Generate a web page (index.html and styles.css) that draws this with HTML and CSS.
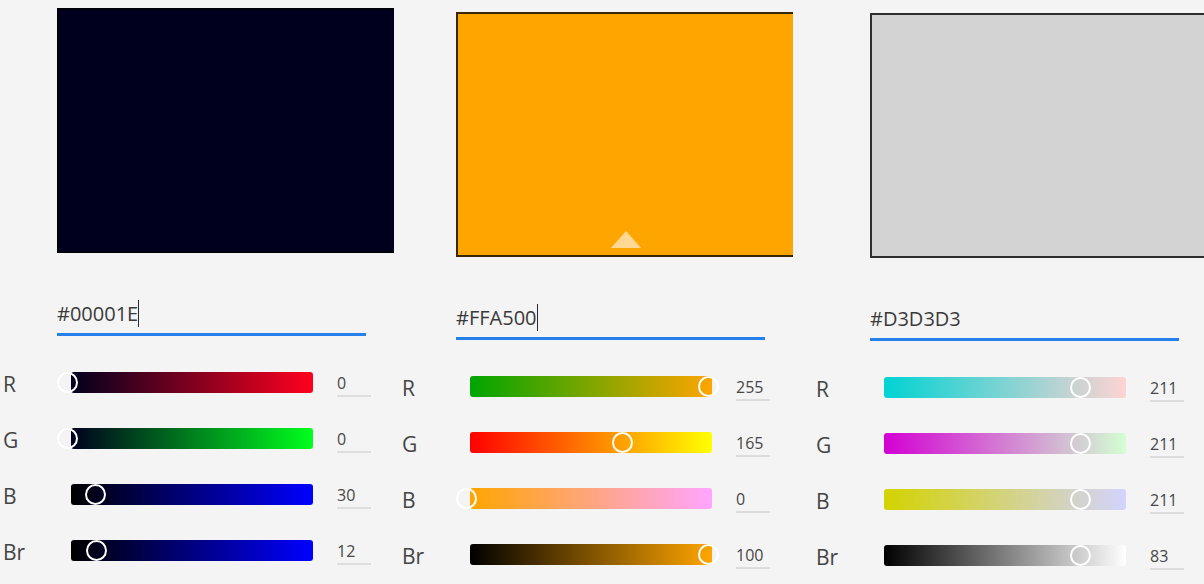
FILE: index.html
```html
<!DOCTYPE html>
<html lang="en">
<head>
<meta charset="utf-8">
<title>Colour pickers</title>
<link rel="stylesheet" href="styles.css">
</head>
<body>
<main class="pickers">
  <section class="picker picker--navy">
    <div class="swatch swatch--navy"></div>
    <div class="hex"><span class="hex-text hex-text--focus">#00001E</span></div>
    <div class="channels">
      <div class="channel">
        <span class="channel-label">R</span>
        <div class="track navy-r"><span class="thumb" style="--p:0"></span></div>
        <span class="channel-value">0</span>
      </div>
      <div class="channel">
        <span class="channel-label">G</span>
        <div class="track navy-g"><span class="thumb" style="--p:0"></span></div>
        <span class="channel-value">0</span>
      </div>
      <div class="channel">
        <span class="channel-label">B</span>
        <div class="track navy-b"><span class="thumb" style="--p:0.1176"></span></div>
        <span class="channel-value">30</span>
      </div>
      <div class="channel">
        <span class="channel-label">Br</span>
        <div class="track navy-br"><span class="thumb" style="--p:0.12"></span></div>
        <span class="channel-value">12</span>
      </div>
    </div>
  </section>

  <section class="picker picker--orange">
    <div class="swatch swatch--orange"><span class="swatch-marker"></span></div>
    <div class="hex"><span class="hex-text hex-text--focus">#FFA500</span></div>
    <div class="channels">
      <div class="channel">
        <span class="channel-label">R</span>
        <div class="track orange-r"><span class="thumb" style="--p:1"></span></div>
        <span class="channel-value">255</span>
      </div>
      <div class="channel">
        <span class="channel-label">G</span>
        <div class="track orange-g"><span class="thumb" style="--p:0.647"></span></div>
        <span class="channel-value">165</span>
      </div>
      <div class="channel">
        <span class="channel-label">B</span>
        <div class="track orange-b"><span class="thumb" style="--p:0"></span></div>
        <span class="channel-value">0</span>
      </div>
      <div class="channel">
        <span class="channel-label">Br</span>
        <div class="track orange-br"><span class="thumb" style="--p:1"></span></div>
        <span class="channel-value">100</span>
      </div>
    </div>
  </section>

  <section class="picker picker--grey">
    <div class="swatch swatch--grey"></div>
    <div class="hex"><span class="hex-text">#D3D3D3</span></div>
    <div class="channels">
      <div class="channel">
        <span class="channel-label">R</span>
        <div class="track grey-r"><span class="thumb" style="--p:0.8275"></span></div>
        <span class="channel-value">211</span>
      </div>
      <div class="channel">
        <span class="channel-label">G</span>
        <div class="track grey-g"><span class="thumb" style="--p:0.8275"></span></div>
        <span class="channel-value">211</span>
      </div>
      <div class="channel">
        <span class="channel-label">B</span>
        <div class="track grey-b"><span class="thumb" style="--p:0.8275"></span></div>
        <span class="channel-value">211</span>
      </div>
      <div class="channel">
        <span class="channel-label">Br</span>
        <div class="track grey-br"><span class="thumb" style="--p:0.83"></span></div>
        <span class="channel-value">83</span>
      </div>
    </div>
  </section>
</main>
</body>
</html>
```

FILE: styles.css
```css
* {
  box-sizing: border-box;
}

html,
body {
  margin: 0;
  padding: 0;
  background: #f4f4f4;
  overflow: hidden;
}

body {
  width: 1204px;
  height: 584px;
  font-family: "Open Sans", "Noto Sans", sans-serif;
  color: #3c3c3c;
}

.pickers {
  display: flex;
  align-items: flex-start;
  width: 1204px;
  height: 584px;
  overflow: hidden;
}

.picker {
  flex: 0 0 391px;
  width: 391px;
  overflow: hidden;
  display: flex;
  flex-direction: column;
}

.picker--navy {
  margin-left: 3px;
  padding-top: 8px;
}

.picker--orange {
  margin-left: 8px;
  padding-top: 12px;
}

.picker--grey {
  margin-left: 23px;
  padding-top: 13px;
}

/* swatch */
.swatch {
  position: relative;
  margin-left: 54px;
  width: 340px;
  height: 245px;
  flex: 0 0 auto;
  border: 2px solid;
}

.swatch--navy {
  background: #00001e;
  border-color: #000008;
}

.swatch--orange {
  background: #ffa500;
  border-color: #3a2700;
}

.swatch--grey {
  background: #d3d3d3;
  border-color: #2e2e2e;
}

.swatch-marker {
  position: absolute;
  left: 50%;
  bottom: 7px;
  width: 0;
  height: 0;
  transform: translateX(-50%);
  border-left: 15.5px solid transparent;
  border-right: 15.5px solid transparent;
  border-bottom: 17px solid rgba(255, 255, 255, 0.58);
}

/* hex field */
.hex {
  margin-top: 47px;
  margin-left: 54px;
  width: 309px;
  height: 36px;
  padding-bottom: 5px;
  border-bottom: 3px solid #2680eb;
  font-size: 20px;
  line-height: 28px;
  color: #3a3a3a;
  white-space: nowrap;
}

.hex-text--focus {
  border-right: 1px solid #2b2b2b;
}

/* channels */
.channels {
  margin-top: 36px;
  display: flex;
  flex-direction: column;
}

.channel {
  display: flex;
  align-items: flex-start;
  height: 56px;
}

.channel-label {
  flex: 0 0 68px;
  width: 68px;
  font-size: 21px;
  line-height: 21px;
  margin-top: 2px;
  color: #444;
}

.track {
  position: relative;
  flex: 0 0 242px;
  width: 242px;
  height: 21px;
  border-radius: 3px;
  margin-right: 24px;
}

.thumb {
  position: absolute;
  top: 0;
  left: calc(var(--p) * 242px - 14.5px);
  width: 21px;
  height: 21px;
  border-radius: 50%;
  border: 2px solid #ffffff;
  background: transparent;
}

.channel-value {
  flex: 0 0 34px;
  width: 34px;
  height: 25px;
  font-size: 16px;
  line-height: 22px;
  padding-bottom: 1px;
  border-bottom: 2px solid #dddddd;
  color: #474747;
}

/* gradients: navy #00001E */
.navy-r { background: linear-gradient(to right, rgb(0, 0, 30), rgb(255, 0, 30)); }
.navy-g { background: linear-gradient(to right, rgb(0, 0, 30), rgb(0, 255, 30)); }
.navy-b { background: linear-gradient(to right, rgb(0, 0, 0), rgb(0, 0, 255)); }
.navy-br { background: linear-gradient(to right, rgb(0, 0, 0), rgb(0, 0, 255)); }

/* gradients: orange #FFA500 */
.orange-r { background: linear-gradient(to right, rgb(0, 165, 0), rgb(255, 165, 0)); }
.orange-g { background: linear-gradient(to right, rgb(255, 0, 0), rgb(255, 255, 0)); }
.orange-b { background: linear-gradient(to right, rgb(255, 165, 0), rgb(255, 165, 255)); }
.orange-br { background: linear-gradient(to right, rgb(0, 0, 0), rgb(255, 165, 0)); }

/* gradients: grey #D3D3D3 */
.grey-r { background: linear-gradient(to right, rgb(0, 211, 211), rgb(255, 211, 211)); }
.grey-g { background: linear-gradient(to right, rgb(211, 0, 211), rgb(211, 255, 211)); }
.grey-b { background: linear-gradient(to right, rgb(211, 211, 0), rgb(211, 211, 255)); }
.grey-br { background: linear-gradient(to right, rgb(0, 0, 0), rgb(255, 255, 255)); }
```
